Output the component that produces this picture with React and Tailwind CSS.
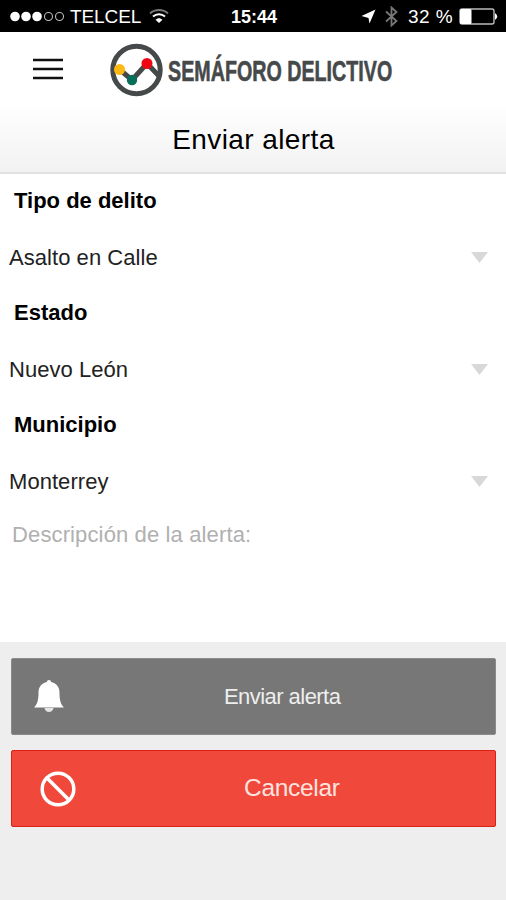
const fields = [
  { id: 'delito', label: 'Tipo de delito', value: 'Asalto en Calle' },
  { id: 'estado', label: 'Estado', value: 'Nuevo León' },
  { id: 'municipio', label: 'Municipio', value: 'Monterrey' },
]

function StatusBar() {
  return (
    <div className="flex h-8 items-center bg-black text-white">
      <div className="flex flex-1 items-center pl-[10px]">
        <svg width="56" height="12" viewBox="0 0 56 12">
          {[5, 16, 27].map((x) => <circle key={x} cx={x} cy="6.5" r="4.8" fill="#fff" />)}
          {[38.5, 49.5].map((x) => <circle key={x} cx={x} cy="6.5" r="4" fill="none" stroke="#bbb" strokeWidth="1.1" />)}
        </svg>
        <span className="ml-[4px] pt-px text-[19px] leading-[31px] tracking-[-0.1px]">TELCEL</span>
        <svg className="ml-[8px]" width="20" height="16" viewBox="0 0 20 16" fill="none">
          <path d="M1 5.500C6 .8 14 .8 19 5.500" stroke="#777" strokeWidth="1.8" />
          <path d="M4 8.500c3.400-3 8.600-3 12 0" stroke="#fff" strokeWidth="2" />
          <path d="M6.500 11.800c2-2.200 5-2.200 7 0L10 15z" fill="#fff" />
        </svg>
      </div>
      <span className="pt-[2px] text-[18px] font-bold leading-[30px]">15:44</span>
      <div className="flex flex-1 items-center justify-end pr-[8px]">
        <svg width="15" height="15" viewBox="0 0 15 15">
          <path d="M14.500.500L8.500 14.500 7.500 9 .500 7z" fill="#fff" />
        </svg>
        <svg className="ml-[9px]" width="13" height="21" viewBox="0 0 13 21" fill="none" stroke="#777" strokeWidth="1.8">
          <path d="M1 5.500l10.500 9.500-5 4.500v-18l5 4.500L1 15.500" />
        </svg>
        <span className="ml-[10px] pt-px text-[19px] leading-[31px] tracking-[0.4px]">32 %</span>
        <svg className="ml-[6px]" width="39" height="17" viewBox="0 0 39 17">
          <rect x="1" y="1" width="34" height="15" rx="2" fill="none" stroke="#bbb" strokeWidth="1.400" />
          <rect x="1" y="1" width="11.500" height="15" rx="1.500" fill="#fff" />
          <path d="M36 5q4.500 3.500 0 7z" fill="#fff" />
        </svg>
      </div>
    </div>
  )
}

function Logo() {
  return (
    <div className="flex items-center">
      <svg className="shrink-0" width="56" height="56" viewBox="0 0 56 56">
        <circle cx="26.500" cy="28" r="23.700" fill="#fff" stroke="#46494a" strokeWidth="5" />
        <path d="M9 27L22 38 37 21.500 49 34" fill="none" stroke="#46494a" strokeWidth="5" />
        <circle cx="9.500" cy="27.500" r="5.500" fill="#fdb913" />
        <circle cx="22" cy="38" r="5.200" fill="#08705a" />
        <circle cx="37" cy="21.500" r="5.500" fill="#ee0712" />
      </svg>
      <span className="ml-[2px] mt-[3px] origin-left scale-x-[0.679] whitespace-nowrap text-[29px] font-bold leading-[36px] text-[#46494a] [-webkit-text-stroke:0.6px_#46494a]">
        SEMÁFORO DELICTIVO
      </span>
    </div>
  )
}

function Header() {
  return (
    <header className="flex h-[142px] flex-col border-b-2 border-[#e2e2e2] bg-linear-to-b from-white from-50% to-[#f2f2f2]">
      <div className="flex h-[76px] items-center pl-[33px]">
        <button aria-label="Menú" className="mt-[-1px] shrink-0">
          <svg width="30" height="22" viewBox="0 0 30 22" stroke="#111" strokeWidth="2.500">
            <path d="M0 2h30M0 11h30M0 20h30" />
          </svg>
        </button>
        <div className="ml-[47px] mt-px w-[286px]"><Logo /></div>
      </div>
      <h1 className="pl-px pt-[2px] text-center text-[28px] leading-[64px] tracking-[0.400px]">Enviar alerta</h1>
    </header>
  )
}

function Field({ label, value }) {
  return (
    <div>
      <div className="h-[54px] pl-[14px] text-[22px] font-bold leading-[54px]">{label}</div>
      <button className="flex h-[58px] w-full items-center justify-between pl-[9px] pr-[18px] text-left text-[22px] tracking-[0.050px] text-[#222]">
        {value}
        <svg width="17" height="11" viewBox="0 0 17 11">
          <path d="M0 0h17L8.500 11z" fill="#d8d8d8" />
        </svg>
      </button>
    </div>
  )
}

export default function App() {
  return (
    <div className="flex h-[900px] w-[506px] flex-col overflow-hidden bg-white font-['Liberation_Sans',Arial,sans-serif] text-black">
      <StatusBar />
      <Header />

      <main className="h-[468px]">
        {fields.map((f) => <Field key={f.id} label={f.label} value={f.value} />)}
        <p className="pl-[12px] text-[22px] leading-[50px] tracking-[0.130px] text-[#b0b0b0]">Descripción de la alerta:</p>
      </main>

      {/* Actions */}
      <footer className="flex flex-1 flex-col gap-[15px] bg-[#eee] pl-[11px] pr-[10px] pt-[16px]">
        <button className="flex h-[77px] items-center rounded-[2px] border border-[#8a8a8a] bg-[#777] text-[#eee]">
          <svg className="ml-[22px]" width="30" height="33" viewBox="0 0 30 33" fill="#fff">
            <path d="M15 0c1.300 0 2 .8 2.100 2 5 1 8.400 4.800 8.400 10.500 0 7.500 1 11.500 4.500 15H0c3.500-3.500 4.500-7.500 4.500-15C4.500 6.800 7.900 3 12.900 2 13 .8 13.700 0 15 0z" />
            <path d="M10.500 28h9c-.500 2.800-2.200 4-4.500 4s-4-1.200-4.500-4z" fill="#e4e4e4" />
          </svg>
          <span className="ml-[160px] text-[22px] tracking-[-0.550px]">Enviar alerta</span>
        </button>
        <button className="flex h-[77px] items-center rounded-[2px] border border-[#dc2015] bg-[#f0493b] text-[#ffe4e0]">
          <svg className="ml-[28px]" width="36" height="36" viewBox="0 0 36 36" fill="none" stroke="#fff" strokeWidth="3.500">
            <circle cx="18" cy="18" r="15.800" />
            <path d="M7 7l22 22" />
          </svg>
          <span className="ml-[168px] text-[24.500px] tracking-[-0.300px]">Cancelar</span>
        </button>
      </footer>
    </div>
  )
}
